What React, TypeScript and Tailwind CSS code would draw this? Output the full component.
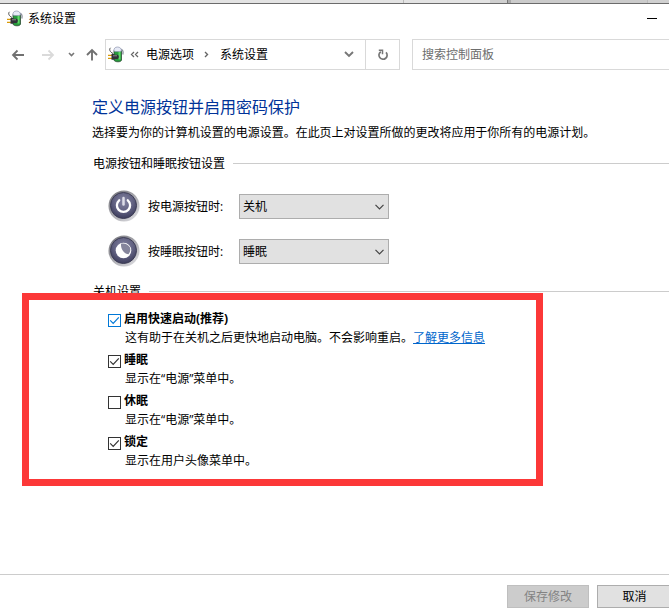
/**
 * 系统设置窗口
 * 电源按钮与关机设置页面
 */

import { useState } from 'react';

// 关机设置选项。
interface ShutdownOption {
  id: string;
  title: string;
  desc: string;
  link?: string;
  focused?: boolean;
}

const OPTIONS: ShutdownOption[] = [
  {
    id: 'fast',
    title: '启用快速启动(推荐)',
    desc: '这有助于在关机之后更快地启动电脑。不会影响重启。',
    link: '了解更多信息',
    focused: true,
  },
  { id: 'sleep', title: '睡眠', desc: '显示在“电源”菜单中。' },
  { id: 'hibernate', title: '休眠', desc: '显示在“电源”菜单中。' },
  { id: 'lock', title: '锁定', desc: '显示在用户头像菜单中。' },
];

// 电池与插头图标。
function PowerIcon() {
  return (
    <svg width="17" height="17" viewBox="0 0 17 17" fill="none" className="shrink-0">
      <path d="M5 7.500C2 6 .8 3.500 2.500 1.800" stroke="#4a4a4a" strokeWidth="1" />
      <path d="M12.500 3.200c2.500.3 3 2.500 2.300 5.300" stroke="#8d919d" strokeWidth="1.300" />
      <path d="M6 4.500h7.500V14c0 1-1.500 1.800-3.500 1.800S6 15 6 14Z" fill="#279a3c" stroke="#2c4a33" strokeWidth=".8" />
      <path d="M10.500 5h2v8.500h-2z" fill="#5fdb68" />
      <path d="M5.800 5c0-2.500 1.200-4 3.700-4s4 1.500 4 4c-2 .8-5.500.8-7.700 0Z" fill="#e6eaf6" stroke="#8d94ad" strokeWidth=".7" />
      <path d="M0 9.300h4.500M0 12.300h4.500" stroke="#d99a08" strokeWidth="1.300" />
      <path d="M3.500 8h2.300l1 .8h2.700c1.800.6 1.800 3.600 0 4.200H6.800l-1 .8H3.500Z" fill="#303238" />
      <path d="M5 9.800h4" stroke="#8a8a8a" strokeWidth="1" />
    </svg>
  );
}

// 圆形按钮图标。
function RoundIcon({ kind }: { kind: 'power' | 'sleep' }) {
  return (
    <svg width="32" height="32" viewBox="0 0 32 32" fill="none" className="mb-0.5 shrink-0">
      <defs>
        <linearGradient id={`ring-${kind}`} x1="4" y1="2" x2="28" y2="30" gradientUnits="userSpaceOnUse">
          <stop stopColor="#77777d" />
          <stop offset=".5" stopColor="#aaaab0" />
          <stop offset="1" stopColor="#dcdce0" />
        </linearGradient>
        <radialGradient id={`ball-${kind}`} cx=".5" cy=".35" r=".65">
          <stop stopColor="#8585a3" />
          <stop offset=".6" stopColor="#606080" />
          <stop offset="1" stopColor="#3c3c5c" />
        </radialGradient>
      </defs>
      <circle cx="16" cy="16" r="15.500" fill={`url(#ring-${kind})`} />
      <circle cx="15.500" cy="15.500" r="13" fill={`url(#ball-${kind})`} stroke="#3d3d55" strokeWidth="1" />
      {kind === 'power' ? (
        <g stroke="#fff" strokeLinecap="round">
          <path d="M11.200 10.300a6.600 6.600 0 1 0 8.600 0" strokeWidth="2.300" />
          <path d="M15.500 8v6.500" strokeWidth="2.500" stroke="#dedee8" />
        </g>
      ) : (
        <>
          <circle cx="15.500" cy="15.500" r="7.800" fill="#fff" />
          <path d="M13 8.800C16 7.800 20 9 22 12.500c.8 3 0 4.800-1.500 6.800-3.500-.3-8-4-7.500-10.500Z" fill="#85859c" />
        </>
      )}
    </svg>
  );
}

// 分组标题，右侧带分隔线。
function GroupTitle({ children }: { children: string }) {
  return (
    <div className="flex h-5 items-center pl-[93px]">
      <span>{children}</span>
      <div className="mb-px ml-2 h-px flex-1 bg-[#ccc]" />
    </div>
  );
}

interface ActionRowProps {
  kind: 'power' | 'sleep';
  label: string;
  value: string;
}

function ActionRow({ kind, label, value }: ActionRowProps) {
  return (
    <div className="flex h-[45px] items-center pl-[108px]">
      <RoundIcon kind={kind} />
      <span className="ml-2 w-[91px]">{label}</span>
      <button className="flex h-[25px] w-[150px] items-center justify-between border border-[#adadad] bg-[#e1e1e1] pr-1 pl-[3px]">
        <span>{value}</span>
        <svg width="9" height="6" viewBox="0 0 9 6" fill="none" stroke="#444" strokeWidth="1.200">
          <path d="M.5.8l4 4 4-4" />
        </svg>
      </button>
    </div>
  );
}

export default function App() {
  const [checked, setChecked] = useState<Record<string, boolean>>({ fast: true, sleep: true, lock: true });

  const toggle = (id: string) => setChecked((prev) => ({ ...prev, [id]: !prev[id] }));

  return (
    <div className="relative flex h-[616px] w-[669px] flex-col overflow-hidden bg-white font-['Open_Sans','Noto_Sans_CJK_SC',sans-serif] text-[12px] leading-[18px] whitespace-nowrap text-black">
      {/* 后方窗口边缘 */}
      <div className="flex h-1 shrink-0 border-b border-[#6b6b6b] bg-[#c8c8c8]">
        <div className="w-[403px] bg-[#e3e3e3]" />
        <div className="w-px bg-[#bbb]" />
        <div className="w-[86px] bg-[#e3e3e3]" />
        <div className="w-[17px] bg-[#cfcfcf]" />
        <div className="w-px bg-[#777]" />
        <div className="w-[3px] bg-[#aaa]" />
        <div className="w-[136px] bg-[#cbcbcb]" />
        <div className="w-px bg-[#bbb]" />
        <div className="flex-1 bg-[#d0d0d0]" />
      </div>

      {/* 标题栏 */}
      <div className="flex h-[30px] shrink-0 items-center pl-[7px]">
        <div className="mb-0.5">
          <PowerIcon />
        </div>
        <span className="ml-1">系统设置</span>
        <div className="mr-3 mb-px ml-auto h-px w-[10px] bg-black" />
      </div>

      {/* 导航栏 */}
      <div className="mt-[5px] flex h-[31px] shrink-0 items-center">
        <svg width="105" height="31" viewBox="0 0 105 31" fill="none" className="shrink-0">
          <path d="M24 16H13M17.500 11.500L13 16l4.500 4.500" stroke="#717171" strokeWidth="1.800" />
          <path d="M42 16h11M48.500 11.500L53 16l-4.500 4.500" stroke="#dadada" strokeWidth="1.800" />
          <path d="M69 14l2.500 2.500L74 14" stroke="#777" strokeWidth="1.600" />
          <path d="M92 21.500V11M87 16l5-5 5 5" stroke="#717171" strokeWidth="1.900" />
        </svg>
        <div className="flex h-[31px] w-[295px] items-center border border-[#d9d9d9] pl-0.5">
          <PowerIcon />
          <svg width="9" height="7" viewBox="0 0 9 7" fill="none" stroke="#666" strokeWidth="1.300" className="ml-[5px]">
            <path d="M4 1L1.500 3.500 4 6M8 1L5.500 3.500 8 6" />
          </svg>
          <span className="ml-[7px]">电源选项</span>
          <svg width="5" height="7" viewBox="0 0 5 7" fill="none" stroke="#666" strokeWidth="1.400" className="ml-[10px]">
            <path d="M1 1l2.500 2.500L1 6" />
          </svg>
          <span className="ml-[11px]">系统设置</span>
          <svg width="10" height="7" viewBox="0 0 10 7" fill="none" stroke="#777" strokeWidth="1.900" className="mr-[11px] ml-auto">
            <path d="M1 1l4 4 4-4" />
          </svg>
          <div className="flex h-full w-[34px] items-center justify-center border-l border-[#d9d9d9]">
            <svg width="12" height="12" viewBox="0 0 12 12" fill="none" stroke="#777" strokeWidth="1.700">
              <path d="M9 3.300a4.100 4.100 0 1 1-5.200-.6" />
              <path d="M1.800 1.300h3.700v3.900" strokeWidth="1.500" />
            </svg>
          </div>
        </div>
        <div className="ml-3 flex h-[31px] flex-1 items-center border border-r-0 border-[#d9d9d9] pl-[9px] text-[#6d6d6d]">
          搜索控制面板
        </div>
      </div>

      {/* 页面内容 */}
      <h1 className="mt-[25px] h-6 pl-[92px] text-[16px] leading-6 text-[#003399]">定义电源按钮并启用密码保护</h1>
      <p className="mt-[5px] pl-[92px] tracking-[-0.02px]">选择要为你的计算机设置的电源设置。在此页上对设置所做的更改将应用于你所有的电源计划。</p>

      <div className="mt-3">
        <GroupTitle>电源按钮和睡眠按钮设置</GroupTitle>
      </div>
      <div className="mt-[10px]">
        <ActionRow kind="power" label="按电源按钮时:" value="关机" />
        <ActionRow kind="sleep" label="按睡眠按钮时:" value="睡眠" />
      </div>

      <div className="mt-2">
        <GroupTitle>关机设置</GroupTitle>
      </div>
      <div className="mt-2 pl-[108px]">
        {OPTIONS.map((item) => {
          const tone = item.focused ? 'border-[#0078d7] text-[#0078d7]' : 'border-[#333] text-[#333]';
          return (
            <div key={item.id} className="flex h-[41px]">
              <button onClick={() => toggle(item.id)} className={`mt-1 h-[13px] w-[13px] shrink-0 border bg-white ${tone}`}>
                {checked[item.id] && (
                  <svg width="11" height="11" viewBox="0 0 11 11" fill="none" stroke="currentColor" strokeWidth="1.200">
                    <path d="M1.200 5.300l3 3 5.600-6" />
                  </svg>
                )}
              </button>
              <div className="ml-[3px]">
                <div className="font-bold">{item.title}</div>
                <div className="mt-px pl-px">
                  {item.desc}
                  {item.link && <a href="#" className="text-[#0066cc] underline">{item.link}</a>}
                </div>
              </div>
            </div>
          );
        })}
      </div>

      {/* 底部按钮 */}
      <div className="mt-auto flex h-[42px] shrink-0 border-t border-[#ccc] pt-[10px]">
        <button className="ml-[507px] h-[23px] w-[82px] shrink-0 border border-[#bfbfbf] bg-[#ccc] leading-[21px] text-[#838383]">保存修改</button>
        <button className="ml-2 h-[23px] w-[75px] shrink-0 border border-[#adadad] bg-[#e1e1e1] leading-[21px]">取消</button>
      </div>

      {/* 红色标注框 */}
      <div className="pointer-events-none absolute top-[293px] left-[22px] h-[193px] w-[521px] border-7 border-[#fc3838]" />
    </div>
  );
}
